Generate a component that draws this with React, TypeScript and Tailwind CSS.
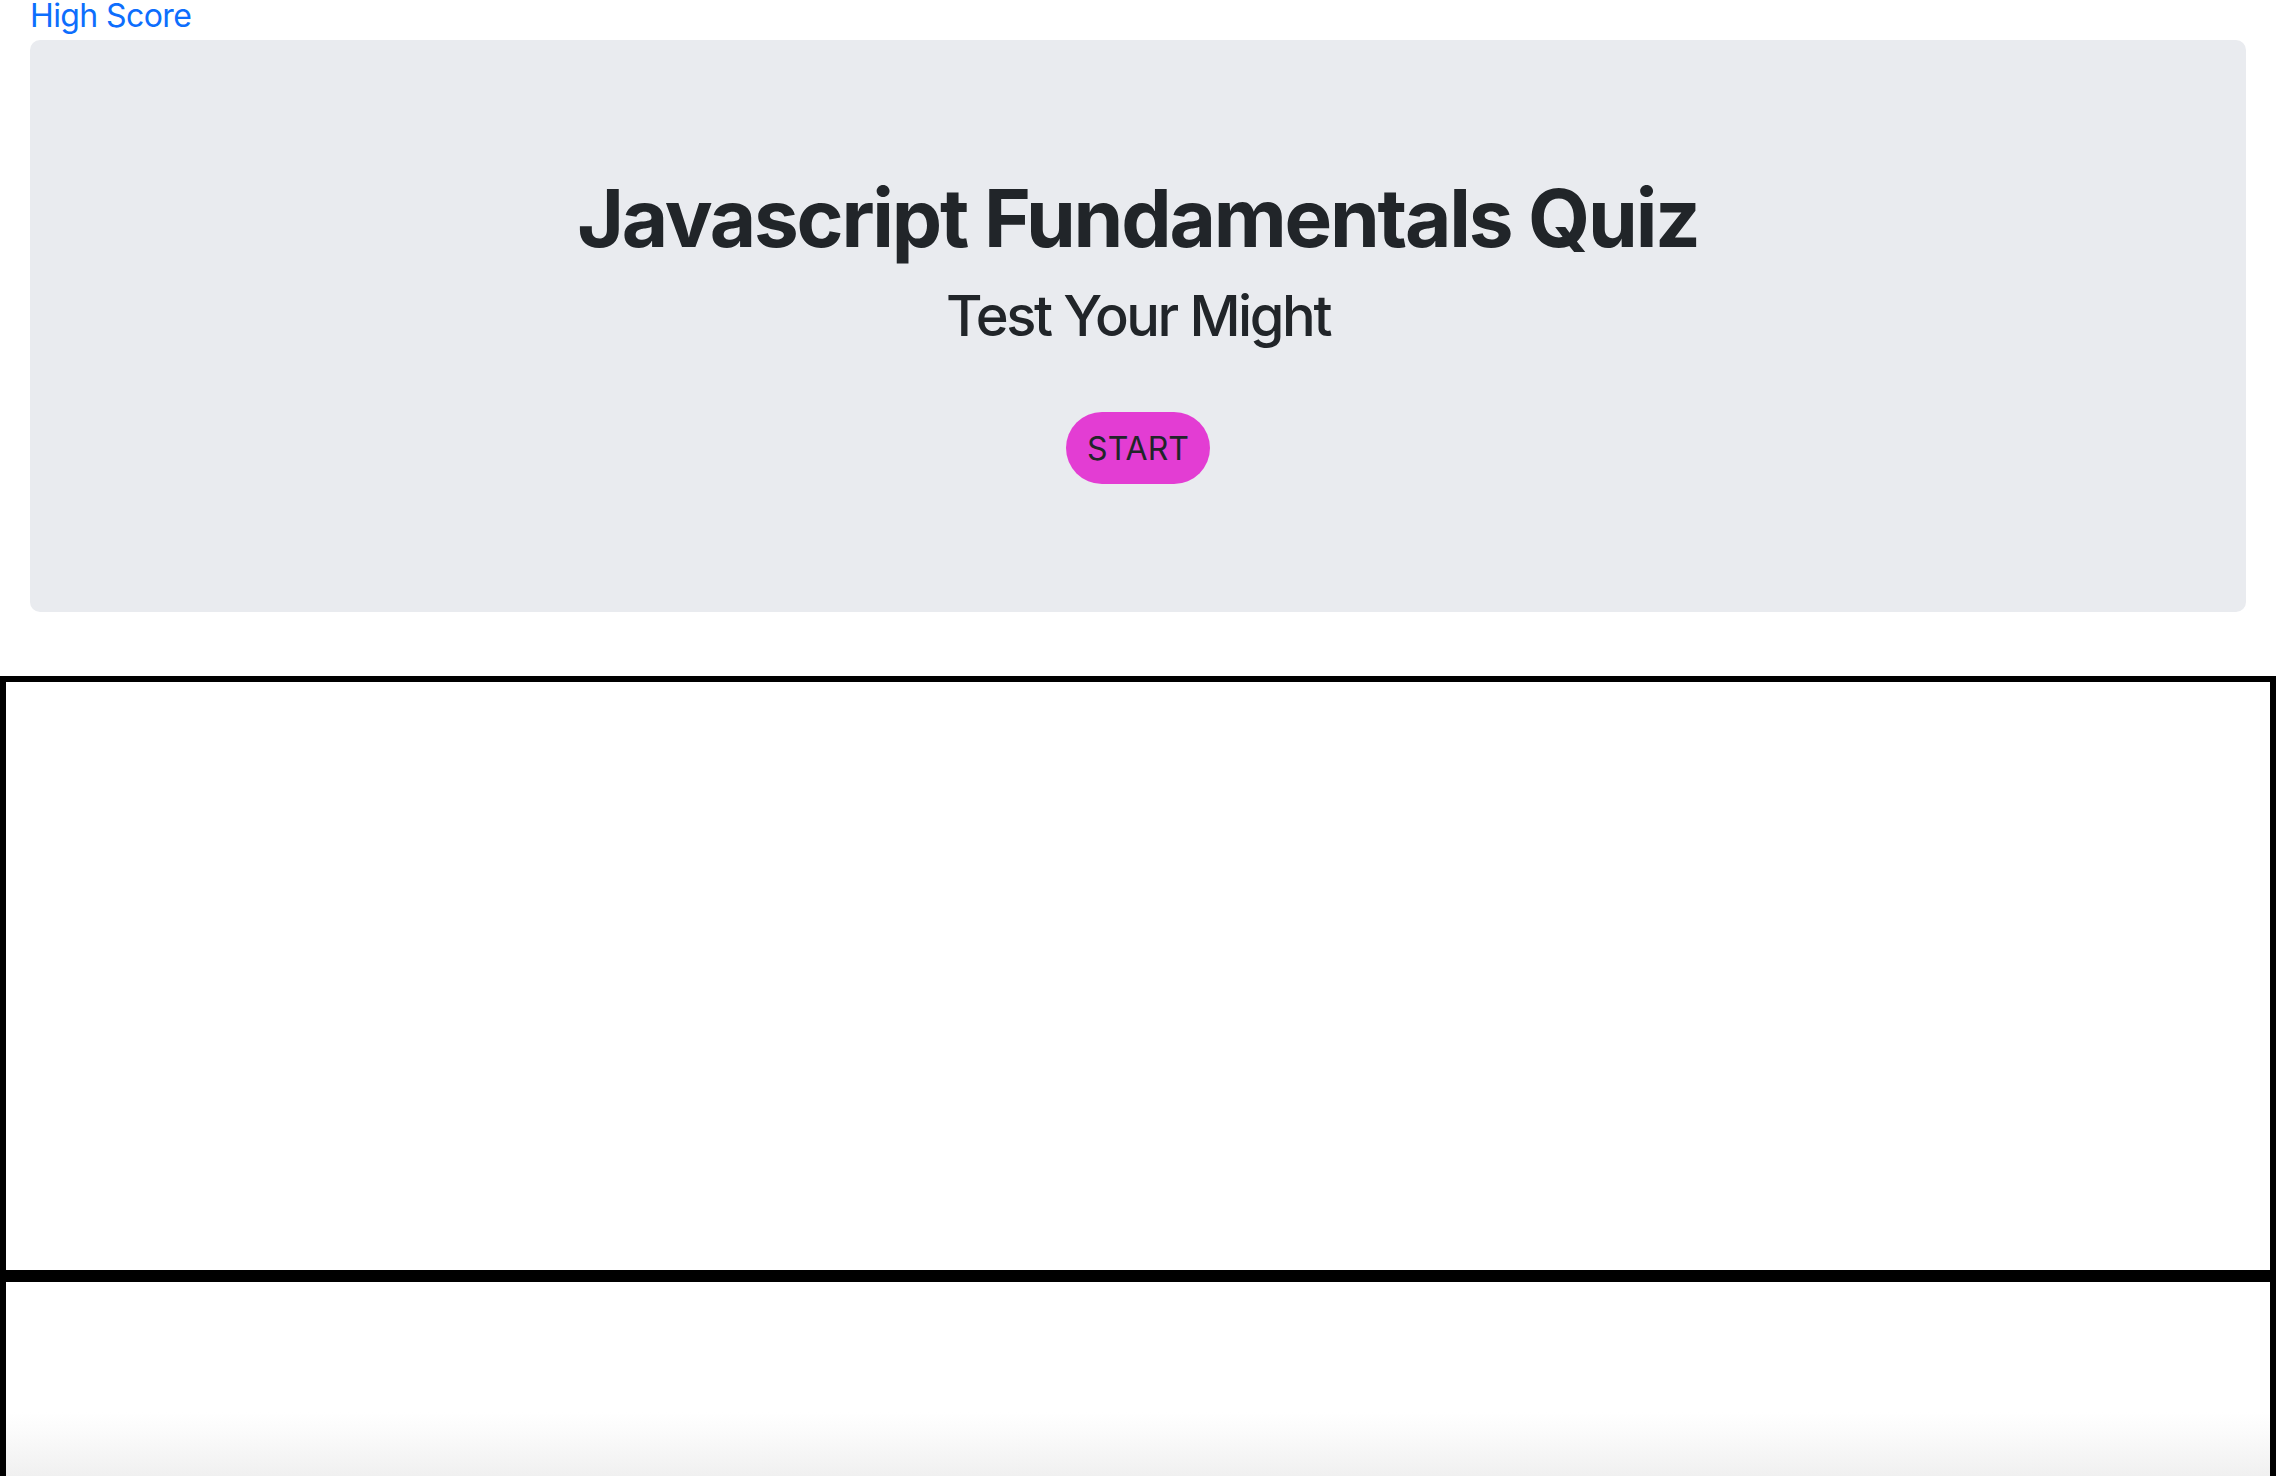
import React from "react";

export default function App() {
  return (
    <div className="w-[2278px] bg-white font-['Inter','Liberation_Sans',sans-serif] text-[#212529]">
      <div className="h-10 pl-[30px]">
        <a href="#" className="text-[32px] leading-8 tracking-[-0.6px] text-[#0d6efd] no-underline">
          High Score
        </a>
      </div>
      <div className="ml-[30px] w-[2216px] rounded-[10px] bg-[#e9ebef] pt-[130px] pb-[128px] flex flex-col items-center">
        <h1 className="text-[80px] leading-[96px] font-bold tracking-[-2.2px]">Javascript Fundamentals Quiz</h1>
        <h3 className="mt-[17px] text-[56px] leading-[67px] font-medium tracking-[-2.4px]">Test Your Might</h3>
        <button className="mt-[62px] h-[72px] w-[144px] rounded-full bg-[#e33dd3] text-[32px] text-[#212529] flex items-center justify-center pt-[2px]">
          START
        </button>
      </div>
      <div className="mt-[64px] w-[2276px] h-[600px] border-[6px] border-black bg-white"></div>
      <div className="w-[2276px] h-[600px] border-[6px] border-black bg-[linear-gradient(to_bottom,#ffffff_130px,#fbfbfb_150px,#f0f0f0_194px)]"></div>
    </div>
  );
}
